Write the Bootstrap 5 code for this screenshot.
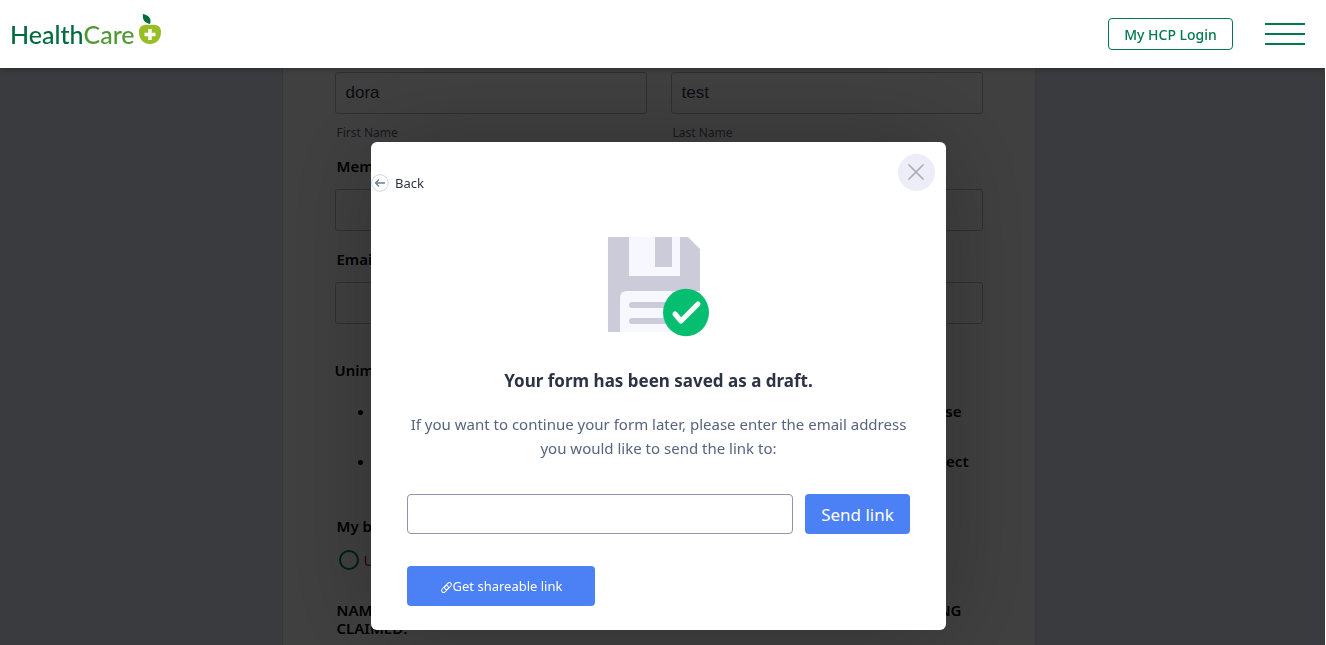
<!DOCTYPE html>
<html lang="en">
<head>
<meta charset="utf-8">
<meta name="viewport" content="width=device-width, initial-scale=1">
<title>HealthCare Plus</title>
<link href="https://cdn.jsdelivr.net/npm/bootstrap@5.3.0/dist/css/bootstrap.min.css" rel="stylesheet">
<style>
  body { font-family: "Noto Sans", "Open Sans", sans-serif; background: #e6e9fb; }
  .shell { height: 100vh; border-right: 1px solid #fff; }
  .topbar { height: 68px; z-index: 1060; box-shadow: 0 2px 5px rgba(0,0,0,.2); }
  .brand { font: 500 25px/32px Lato, sans-serif; color: #006b3f; margin-left: 10px; }
  .brand-light { color: #4f9a35; }
  .brand svg { width: 23px; height: 32px; }
  .login { width: 125px; height: 32px; padding: 0; font-size: 14px; font-weight: 500; color: #00794b; border: 1px solid #00794b; border-radius: 4px; }
  .burger { width: 40px; height: 22px; }
  .burger span { height: 2px; background: #00794b; }
  .stage { padding-right: 8px; }
  .sheet { width: 100%; max-width: 754px; padding: 4px 52px 60px; background: #fff; border: solid #d8dbe8; border-width: 0 1px; color: #000; }
  .names { gap: 24px; }
  .field { height: 42px; padding: 0 10px; border: 1px solid #b8bdc9; border-radius: 3px; font: 17px/20px "Liberation Sans", sans-serif; color: #2c3345; box-shadow: none; }
  .sublabel { font-size: 12px; line-height: 16px; margin: 11px 0 0 2px; color: #57647e; display: block; }
  .q { font-size: 15px; line-height: 18px; font-weight: 600; display: block; margin-left: 2px; }
  .q-first { margin: 16px 0 14px 2px; }
  .q-next { margin: 19px 0 14px 2px; }
  .q-intro { margin: 37px 0 20px; }
  .points { font-size: 15px; line-height: 25px; font-weight: 600; padding-left: 40px; margin-bottom: 18px; }
  .points li { height: 50px; padding-right: 21px; text-align: right; }
  .points li + li { padding-right: 14px; }
  .choice { margin: 15px 0 31px 4px; gap: 5px; font-size: 15px; line-height: 20px; color: #a01048; }
  .choice input { width: 20px; height: 20px; margin: 0; border: 2px solid #00794b; }
  .q-wide { padding-right: 21px; }
  .veil { inset: 68px 1px 0 0; padding: 74px 8px 0 0; background: rgba(0,0,0,.75); z-index: 1050; }
  .dialog { width: 575px; max-width: 100%; padding: 31px 36px 24px; border-radius: 6px; box-shadow: 0 0 100px rgba(0,0,0,.25); }
  .back { margin-left: -36px; font-size: 13px; line-height: 20px; color: #2c3345; gap: 6px; }
  .close-round { width: 37px; height: 37px; top: 12px; right: 11px; background: #ecedf6; }
  .disk { width: 102px; height: 102px; margin-top: 42px; }
  .dialog h1 { font-size: 17px; line-height: 24px; font-weight: 700; color: #2c3345; margin: 32px 0 19px; }
  .dialog p { font-size: 15px; line-height: 24px; color: #57647e; margin: 0 -20px 34px; }
  .sendrow { gap: 12px; margin-bottom: 32px; }
  .mail { height: 40px; border: 1px solid #8d95ad; border-radius: 4px; box-shadow: none; }
  .act { height: 40px; background: #4c80f5; color: #fff; border-radius: 4px; padding: 2px 0 0; border: 0; }
  .act-send { width: 105px; font-size: 17px; flex: none; }
  .act-share { width: 188px; font-size: 13px; }
</style>
</head>
<body>
<div class="shell overflow-hidden">
  <header class="topbar position-relative bg-white d-flex align-items-center justify-content-between">
    <a href="#" class="brand d-flex align-items-center text-decoration-none"><span>Health</span><span class="brand-light">Care</span>
      <svg class="ms-1 mb-2" viewBox="0 0 23 32" aria-hidden="true">
        <path d="M4 0c5 1 9 4 7 10C6 9 3 6 4 0z" fill="#006b3f"/>
        <path d="M11 11c7-1 11 1 11 7 0 8-5 12-11 12S0 26 0 18c0-6 4-8 11-7z" fill="#97bf25"/>
        <path d="M11 15v11M5.500 20.500h11" stroke="#fff" stroke-width="3.500"/>
      </svg>
    </a>
    <div class="d-flex align-items-center me-3">
      <button type="button" class="login btn me-3">My HCP Login</button>
      <button type="button" class="burger btn p-0 border-0 rounded-0 d-flex flex-column justify-content-between ms-3 me-1" aria-label="Menu"><span class="w-100"></span><span class="w-100"></span><span class="w-100"></span></button>
    </div>
  </header>

  <main class="stage d-flex justify-content-center">
    <form class="sheet">
      <div class="names d-flex">
        <div class="flex-fill"><input id="first" class="field form-control" value="dora"><label class="sublabel" for="first">First Name</label></div>
        <div class="flex-fill"><input id="last" class="field form-control" value="test"><label class="sublabel" for="last">Last Name</label></div>
      </div>
      <label class="q q-first" for="member">Member</label>
      <input id="member" class="field form-control">
      <label class="q q-next" for="email">Email</label>
      <input id="email" class="field form-control">
      <div class="q q-intro">Unimed</div>
      <ul class="points"><li>se</li><li>ect</li></ul>
      <div class="q">My b</div>
      <div class="choice d-flex align-items-center"><input id="u" type="radio" class="form-check-input bg-transparent"><label for="u">U</label></div>
      <div class="q q-wide"><div class="d-flex justify-content-between"><span>NAM</span><span>NG</span></div>CLAIMED:</div>
    </form>
  </main>
</div>

<div class="veil position-fixed d-flex justify-content-center align-items-start">
  <section class="dialog position-relative bg-white" role="dialog" aria-labelledby="saved">
    <button type="button" class="back btn p-0 border-0 d-flex align-items-center">
      <svg width="18" height="18" viewBox="0 0 18 18" fill="none" aria-hidden="true"><circle cx="9" cy="9" r="8.300" stroke="#ced6de"/><path d="M14 9H4.500M8 5.500L4.500 9 8 12.500" stroke="#6c8096" stroke-width="1.300"/></svg>
      <span>Back</span>
    </button>
    <button type="button" class="close-round btn position-absolute rounded-circle border-0 p-0 d-flex align-items-center justify-content-center" aria-label="Close">
      <svg width="17" height="17" viewBox="0 0 17 17"><path d="M1 1l14 14M15 1L1 15" stroke="#a9abb8" stroke-width="1.700" stroke-linecap="round"/></svg>
    </button>
    <svg class="disk d-block mx-auto" viewBox="0 0 102 102" aria-hidden="true">
      <path d="M0 2h80l12 12v83H0z" fill="#cbcbd9"/>
      <path d="M21 2h51v39H21z" fill="#f6f7ff"/><path d="M47 2h17v30H47z" fill="#cbcbd9"/>
      <path d="M12 97V63q0-7 7-7h73v41z" fill="#f6f7ff"/>
      <path d="M24 70h50M24 86h50" stroke="#cbcbd9" stroke-width="6" stroke-linecap="round"/>
      <ellipse cx="78" cy="77.500" rx="23" ry="23.700" fill="#06be70"/>
      <path d="M67 79l6 7 17-17" fill="none" stroke="#fff" stroke-width="5" stroke-linecap="round" stroke-linejoin="round"/>
    </svg>
    <h1 id="saved" class="text-center">Your form has been saved as a draft.</h1>
    <p class="text-center">If you want to continue your form later, please enter the email address<br>you would like to send the link to:</p>
    <form class="sendrow d-flex">
      <input type="email" class="mail form-control" aria-label="Email address">
      <button type="button" class="act act-send btn">Send link</button>
    </form>
    <button type="button" class="act act-share btn d-flex align-items-center justify-content-center">
      <svg width="13" height="13" viewBox="0 0 13 13" fill="none" stroke="#fff" stroke-width="1" aria-hidden="true"><rect x="-4" y="-2" width="8" height="4" rx="2" transform="translate(5 8) rotate(-45)"/><rect x="-4" y="-2" width="8" height="4" rx="2" transform="translate(8 5) rotate(-45)"/></svg>
      <span>Get shareable link</span>
    </button>
  </section>
</div>
<script src="https://cdn.jsdelivr.net/npm/bootstrap@5.3.0/dist/js/bootstrap.bundle.min.js"></script>
</body>
</html>
